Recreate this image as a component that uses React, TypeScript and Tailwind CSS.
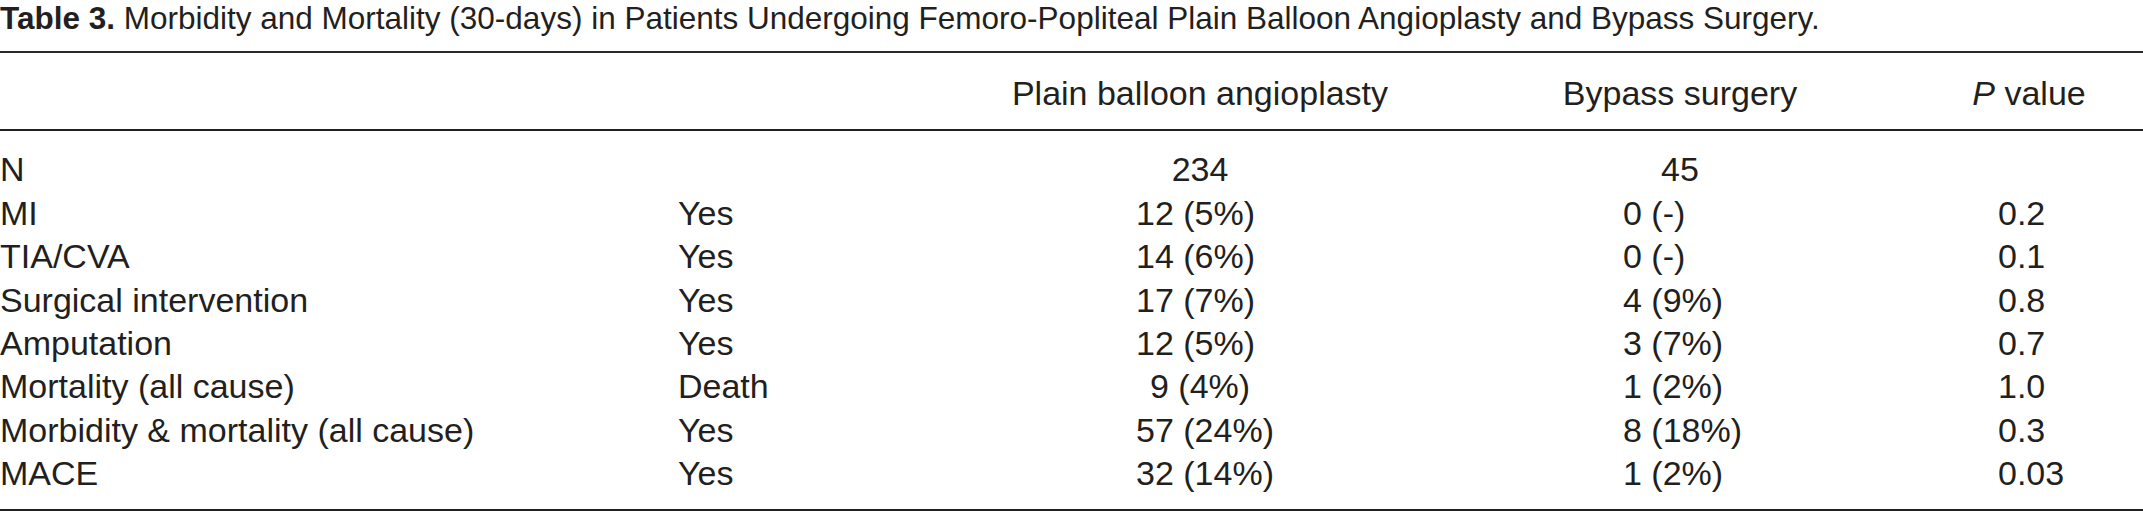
const HEAD_COLS = 'grid grid-cols-[1000px_400px_80px_400px_49px_200px]'
const BODY_COLS = 'grid grid-cols-[678px_458px_487px_375px_1fr]'

type Row = {
  label: string
  event: string
  balloon: string
  bypass: string
  p: string
  indent?: boolean
}

const rows: Row[] = [
  { label: 'MI', event: 'Yes', balloon: '12 (5%)', bypass: '0 (-)', p: '0.2' },
  { label: 'TIA/CVA', event: 'Yes', balloon: '14 (6%)', bypass: '0 (-)', p: '0.1' },
  { label: 'Surgical intervention', event: 'Yes', balloon: '17 (7%)', bypass: '4 (9%)', p: '0.8' },
  { label: 'Amputation', event: 'Yes', balloon: '12 (5%)', bypass: '3 (7%)', p: '0.7' },
  { label: 'Mortality (all cause)', event: 'Death', balloon: '9 (4%)', bypass: '1 (2%)', p: '1.0', indent: true },
  { label: 'Morbidity & mortality (all cause)', event: 'Yes', balloon: '57 (24%)', bypass: '8 (18%)', p: '0.3' },
  { label: 'MACE', event: 'Yes', balloon: '32 (14%)', bypass: '1 (2%)', p: '0.03' },
]

export default function App() {
  return (
    <main className="w-[2143px] h-[514px] overflow-hidden bg-white text-[#231f20] font-['Liberation_Sans',Arial,sans-serif] text-[34px]">
      <p className="text-[31.5px] leading-[36px] whitespace-nowrap">
        <span className="font-bold">Table 3.</span> Morbidity and Mortality
        (30-days) in Patients Undergoing Femoro-Popliteal Plain Balloon
        Angioplasty and Bypass Surgery.
      </p>

      <div className="mt-[15px] border-t-2 border-[#2b2b2b]">
        {/* Header */}
        <div
          className={`${HEAD_COLS} pt-[18.5px] pb-[14px] leading-[43.4px] border-b-2 border-[#231f20] whitespace-nowrap`}
        >
          <span />
          <span className="text-center">Plain balloon angioplasty</span>
          <span />
          <span className="text-center">Bypass surgery</span>
          <span />
          <span className="text-center">
            <i>P</i> value
          </span>
        </div>

        {/* Body */}
        <div className="pt-[17.5px] pb-[13.5px] leading-[43.4px] border-b-2 border-[#231f20] whitespace-nowrap">
          <div className={HEAD_COLS}>
            <span>N</span>
            <span className="text-center">234</span>
            <span />
            <span className="text-center">45</span>
            <span />
            <span />
          </div>
          {rows.map((row) => (
            <div key={row.label} className={BODY_COLS}>
              <span>{row.label}</span>
              <span>{row.event}</span>
              <span className={row.indent ? 'pl-[14px]' : ''}>
                {row.balloon}
              </span>
              <span>{row.bypass}</span>
              <span>{row.p}</span>
            </div>
          ))}
        </div>
      </div>
    </main>
  )
}
